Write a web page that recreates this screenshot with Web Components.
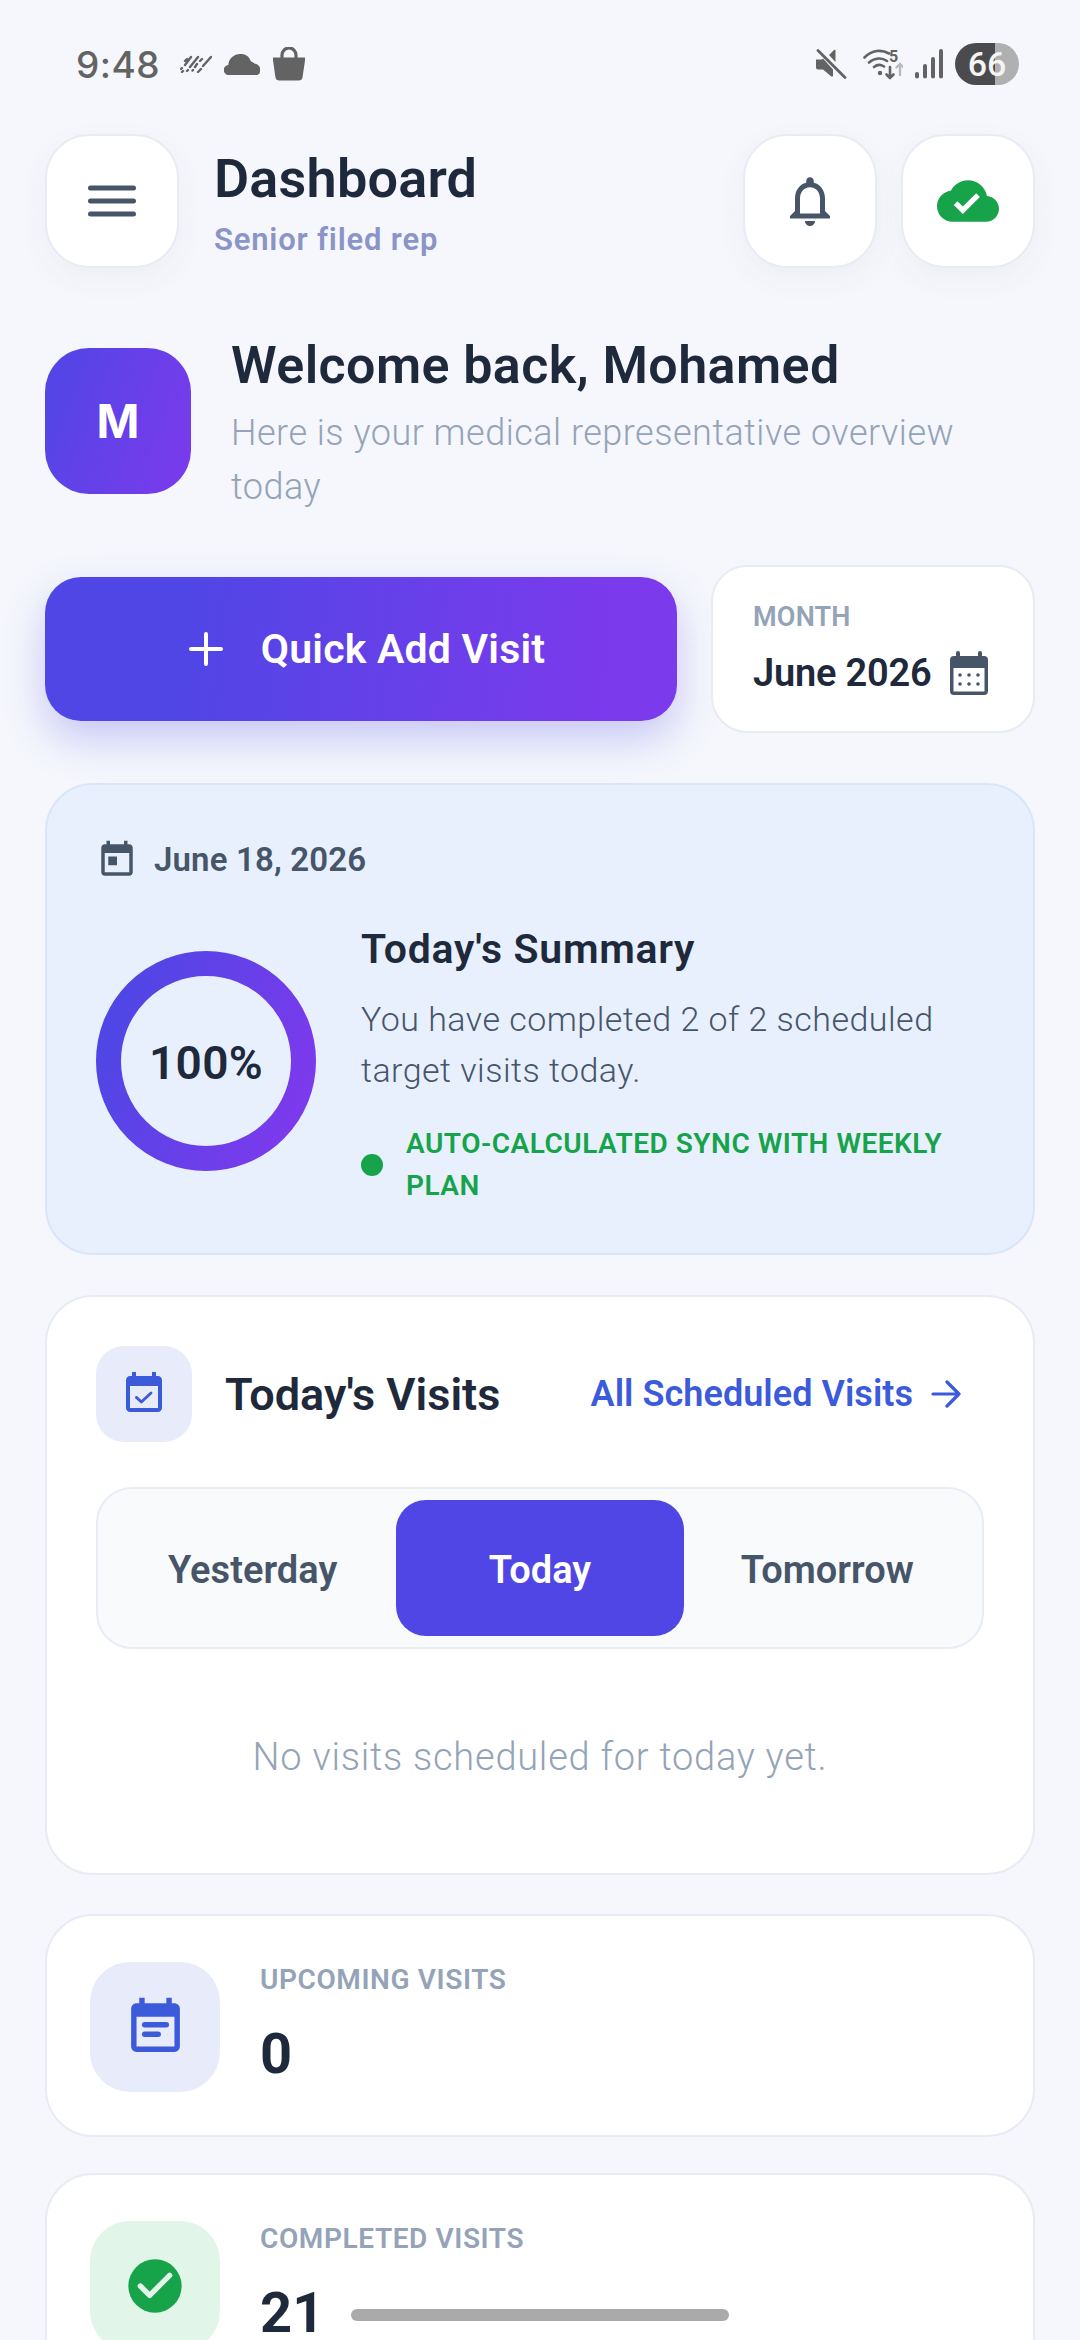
<!doctype html>
<html><head><meta charset="utf-8"><title>Dashboard</title>
<style>
html,body{margin:0;padding:0;height:2340px;overflow:hidden;background:#f5f7fc}
body{font-family:Roboto,"Noto Sans",sans-serif;color:#1e293b}
</style></head><body>
<app-page>
  <status-bar></status-bar>
  <app-header title="Dashboard" sub="Senior filed rep"></app-header>
  <welcome-block initial="M" name="Welcome back, Mohamed" text="Here is your medical representative overview today"></welcome-block>
  <action-row></action-row>
  <summary-card></summary-card>
  <visits-card></visits-card>
  <stat-card label="UPCOMING VISITS" value="0" kind="upcoming"></stat-card>
  <stat-card label="COMPLETED VISITS" value="21" kind="done"></stat-card>
</app-page>
<home-bar></home-bar>
<script>
const def=(name,css,html)=>customElements.define(name,class extends HTMLElement{
  connectedCallback(){
    if(this.shadowRoot)return;
    const r=this.attachShadow({mode:'open'});
    const h=typeof html==='function'?html(this):html;
    r.innerHTML=`<style>*,:host{box-sizing:border-box}${css}</style>${h}`;
  }
});
const card='background:#fff;border:2px solid #e8ebf4;';

def('app-page',`:host{display:flex;flex-direction:column;padding:0 45px}`,`<slot></slot>`);

def('status-bar',`
:host{display:flex;align-items:center;height:134px;margin:0 16px 0 31px;padding-bottom:6px;color:#636363}
.t{font:500 37px Inter,sans-serif;letter-spacing:.5px;margin-right:20px;line-height:1}
svg{display:block;flex:none}
.sp{flex:1}
.bat{width:64px;height:42px;border-radius:21px;overflow:hidden;background:linear-gradient(90deg,#4b4b4d 0 40px,#b0b0b3 40px);color:#f4f4f4;font:500 34px/42px Roboto,sans-serif;text-align:center;margin-left:12px}
`,`
<span class="t">9:48</span>
<svg width="32" height="20" viewBox="0 0 32 20" style="margin-right:12px"><g stroke="#636363" stroke-width="2.400" stroke-linecap="round" fill="none"><path d="M7 5L5 7M2 14l-1 1M11 3L5 11M3 17l-1 1M18 3l-8 10M8 16l-1 1M22 5l-2 2M17 10l-2 3M13 16l-.5.6M31 3l-8 9M21 15l-3 3"/></g></svg>
<svg width="36" height="21" viewBox="0 0 36 21" style="margin-right:12px"><path fill="#636363" d="M5 21a5 5 0 0 1-.6-10A12 11 0 0 1 17 0a10 10 0 0 1 10 7.600a7 7 0 0 1 3.500 1.900a6 6 0 0 1 5.500 7.500v.5c0 2-1.500 3.500-3.500 3.500z"/></svg>
<svg width="34" height="34" viewBox="0 0 34 34"><path fill="none" stroke="#636363" stroke-width="3.200" d="M10 11V8a7 7 0 0 1 14 0v3"/><path fill="#636363" d="M1 10.500h32v3l-2.400 16.500a4 4 0 0 1-4 3.500H7.400a4 4 0 0 1-4-3.500L1 13.500z"/></svg>
<span class="sp"></span>
<svg width="32" height="30" viewBox="0 0 32 30" style="margin-right:16px"><path fill="#636363" d="M1 10.500h6l1-1 10 11v6c0 1.200-1 1.500-2 .7l-8-6.700H3a2 2 0 0 1-2-2zM14 6l5-5c.8-.6 1.500-.2 1.500 1v11z"/><path stroke="#636363" stroke-width="2.800" stroke-linecap="round" d="M3 1.500l27 27"/></svg>
<svg width="40" height="32" viewBox="0 0 40 32" style="margin-right:12px"><g fill="none" stroke="#636363" stroke-width="2.600" stroke-linecap="round"><path d="M1.500 9.500C9 1.500 19 1.500 26 5.500M6 14.500c6-5 13-5 18-1.500M11 19c3-2.500 7-2.500 10-.5"/><path d="M27 19v10.500M23.500 26.500l3.500 3.500 3.500-3.500"/></g><circle cx="17" cy="25" r="2.200" fill="#636363"/><g fill="none" stroke="#b9babc" stroke-width="2.400" stroke-linecap="round"><path d="M37 27V16M33.500 19.500l3.500-3.500 3.500 3.500"/></g><text x="26" y="13.500" font-family="Roboto" font-weight="700" font-size="16" fill="#636363">5</text></svg>
<svg width="28" height="30" viewBox="0 0 28 30"><g fill="#636363"><rect x="0" y="23" width="4" height="6.500" rx="2"/><rect x="8" y="15" width="4" height="14.500" rx="2"/><rect x="16" y="8" width="4" height="21.500" rx="2"/><rect x="24" y="0" width="4" height="29.500" rx="2"/></g></svg>
<div class="bat">66</div>
`);

def('icon-button',`
:host{display:flex;align-items:center;justify-content:center;width:134px;height:134px;${card}border-radius:44px;box-shadow:0 10px 30px rgba(71,85,105,.05);flex:none}
`,`<slot></slot>`);

def('app-header',`
:host{display:flex;align-items:center;gap:24px;height:134px}
.tx{flex:1;display:flex;flex-direction:column;gap:10px;margin-left:11px;padding-top:6px}
.a{font-weight:600;font-size:54px;letter-spacing:.2px;line-height:62px;color:#1e293b}
.b{font-weight:600;font-size:31px;letter-spacing:.8px;line-height:40px;color:#8b94c7}
svg{display:block}
`,h=>`
<icon-button><svg width="60" height="60" viewBox="0 0 60 60"><path stroke="#475569" stroke-width="5" stroke-linecap="round" d="M8.500 17h43M8.500 30h43M8.500 43h43"/></svg></icon-button>
<div class="tx"><div class="a">${h.getAttribute('title')}</div><div class="b">${h.getAttribute('sub')}</div></div>
<icon-button><svg width="60" height="60" viewBox="0 0 24 24"><path fill="#475569" d="M12 22c1.100 0 2-.9 2-2h-4c0 1.100.9 2 2 2zm6-6v-5c0-3.070-1.630-5.640-4.500-6.320V4c0-.83-.67-1.500-1.500-1.500s-1.500.67-1.500 1.500v.68C7.640 5.360 6 7.920 6 11v5l-2 2v1h16v-1l-2-2zm-2 1H8v-6c0-2.480 1.510-4.500 4-4.500s4 2.020 4 4.500v6z"/></svg></icon-button>
<icon-button><svg width="62" height="62" viewBox="0 0 24 24"><path fill="#16a34a" d="M19.350 10.040C18.670 6.590 15.640 4 12 4 9.110 4 6.600 5.640 5.350 8.040 2.340 8.360 0 10.910 0 14c0 3.310 2.690 6 6 6h13c2.760 0 5-2.240 5-5 0-2.640-2.050-4.780-4.650-4.960zM10 17l-3.500-3.500 1.410-1.410L10 14.170 15.180 9l1.410 1.410L10 17z"/></svg></icon-button>
`);

def('welcome-block',`
:host{display:flex;align-items:center;gap:40px;margin-top:60px}
.av{flex:none;width:146px;height:146px;border-radius:44px;background:linear-gradient(110deg,#4f46e5,#7c3aed);color:#fff;font:700 46px Inter,sans-serif;display:flex;align-items:center;justify-content:center}
.tx{max-width:770px;padding-top:3px}
.a{font-weight:600;font-size:52px;letter-spacing:.4px;line-height:70px;color:#1e293b}
.b{font-weight:300;font-size:36px;letter-spacing:.5px;line-height:54px;color:#94a3b8;margin-top:5px}
`,h=>`<div class="av">${h.getAttribute('initial')}</div><div class="tx"><div class="a">${h.getAttribute('name')}</div><div class="b">${h.getAttribute('text')}</div></div>`);

def('action-row',`
:host{display:flex;align-items:center;gap:34px;margin-top:51px}
.q{flex:1;height:144px;border-radius:36px;background:linear-gradient(95deg,#4f46e5 20%,#7c3aed 90%);box-shadow:0 18px 42px rgba(79,70,229,.27);display:flex;align-items:center;justify-content:center;gap:38px;padding-left:12px;color:#fff;font-weight:600;font-size:41px;letter-spacing:.2px}
.m{flex:none;width:324px;height:168px;${card}border-radius:36px;padding:34px 0 0 40px}
.l{font-weight:600;font-size:27px;letter-spacing:.2px;line-height:32px;color:#94a3b8}
.r{display:flex;align-items:center;gap:18px;margin-top:13px;font-weight:600;font-size:38px;letter-spacing:-.2px;line-height:54px;color:#1e293b}
svg{display:block;flex:none}
`,`
<div class="q"><svg width="34" height="34" viewBox="0 0 34 34"><path stroke="#fff" stroke-width="4" stroke-linecap="round" d="M17 2v30M2 17h30"/></svg><span>Quick Add Visit</span></div>
<div class="m"><div class="l">MONTH</div><div class="r"><span>June 2026</span><svg width="38" height="44" viewBox="0 0 38 44"><path fill="#475569" d="M8 0a2 2 0 0 1 2 2v3h18V2a2 2 0 0 1 4 0v3h2a4 4 0 0 1 4 4v31a4 4 0 0 1-4 4H4a4 4 0 0 1-4-4V9a4 4 0 0 1 4-4h2V2a2 2 0 0 1 2-2z"/><rect x="3.500" y="17" width="31" height="23.500" fill="#fff"/><g fill="#475569"><circle cx="10" cy="24" r="1.800"/><circle cx="19" cy="24" r="1.800"/><circle cx="28" cy="24" r="1.800"/><circle cx="10" cy="33" r="1.800"/><circle cx="19" cy="33" r="1.800"/><circle cx="28" cy="33" r="1.800"/></g></svg></div></div>
`);

def('progress-ring',`
:host{position:relative;display:block;flex:none;width:220px;height:220px}
svg{display:block}
.v{position:absolute;inset:0;display:flex;align-items:center;justify-content:center;font-weight:600;font-size:46px;letter-spacing:.3px;color:#1e293b;padding-top:4px}
`,h=>`<svg width="220" height="220" viewBox="0 0 220 220"><defs><linearGradient id="g" x1="0" y1=".3" x2="1" y2=".7"><stop offset="0" stop-color="#4f46e5"/><stop offset="1" stop-color="#7c3aed"/></linearGradient></defs><circle cx="110" cy="110" r="97.500" fill="none" stroke="url(#g)" stroke-width="25"/></svg><div class="v"><slot></slot></div>`);

def('summary-card',`
:host{display:block;margin-top:50px;height:472px;background:#e8f0fe;border:2px solid #d9e5f9;border-radius:48px;padding:51px 49px 0}
.d{display:flex;align-items:center;gap:16px;font-weight:600;font-size:33px;letter-spacing:.15px;line-height:48px;color:#475569}
svg{display:block;flex:none}
.body{display:flex;align-items:center;gap:45px;margin-top:30px}
.t{font-weight:600;font-size:41px;letter-spacing:.7px;line-height:60px;color:#1e293b;padding-top:5px}
.p{font-weight:300;font-size:34px;letter-spacing:.47px;line-height:51px;color:#475569;margin-top:15px}
.s{display:flex;align-items:center;gap:23px;margin-top:27px;font-weight:600;font-size:28px;letter-spacing:.5px;line-height:42px;color:#16a34a}
.dot{flex:none;width:22px;height:22px;border-radius:50%;background:#16a34a}
`,`
<div class="d"><svg width="42" height="42" viewBox="0 0 24 24"><path fill="#475569" d="M19 3h-1V1h-2v2H8V1H6v2H5c-1.110 0-1.990.9-1.990 2L3 19c0 1.100.89 2 2 2h14c1.100 0 2-.9 2-2V5c0-1.100-.9-2-2-2zm0 16H5V8h14v11zM7 10h5v5H7z"/></svg><span>June 18, 2026</span></div>
<div class="body"><progress-ring>100%</progress-ring><div>
<div class="t">Today's Summary</div>
<div class="p">You have completed 2 of 2 scheduled target visits today.</div>
<div class="s"><span class="dot"></span><span>AUTO-CALCULATED SYNC WITH WEEKLY PLAN</span></div>
</div></div>
`);

def('day-tabs',`
:host{display:grid;grid-template-columns:1fr 1fr 1fr;height:162px;margin-top:45px;padding:11px;background:#f8fafc;border:2px solid #e8ecf4;border-radius:36px}
.x{display:flex;align-items:center;justify-content:center;font-weight:600;font-size:38px;letter-spacing:.05px;color:#475569;border-radius:30px;padding-top:3px}
.on{background:#4f46e5;color:#fff}
`,`<div class="x">Yesterday</div><div class="x on">Today</div><div class="x">Tomorrow</div>`);

def('visits-card',`
:host{display:block;margin-top:40px;height:580px;${card}border-radius:48px;padding:49px 49px 0}
.h{display:flex;align-items:center;gap:33px}
.i{flex:none;width:96px;height:96px;border-radius:28px;background:#e8ebfa;display:flex;align-items:center;justify-content:center}
.t{flex:1;font-weight:600;font-size:45px;color:#1e293b}
.l{display:flex;align-items:center;gap:18px;font-weight:600;font-size:36px;letter-spacing:.05px;color:#3b5bdb;margin-right:23px}
.e{text-align:center;font-weight:300;font-size:38px;letter-spacing:.75px;line-height:54px;color:#94a3b8;margin-top:81px}
svg{display:block;flex:none}
`,`
<div class="h"><div class="i"><svg width="48" height="48" viewBox="0 0 24 24"><path fill="#3b5bdb" d="M19 3h-1V1h-2v2H8V1H6v2H5c-1.110 0-1.990.9-1.990 2L3 19c0 1.100.89 2 2 2h14c1.100 0 2-.9 2-2V5c0-1.100-.9-2-2-2zm0 16H5V8h14v11z"/><path fill="none" stroke="#3b5bdb" stroke-width="1.400" stroke-linecap="round" stroke-linejoin="round" d="M8.200 13.700l2.500 2.300 4.800-4.500"/></svg></div>
<div class="t">Today's Visits</div>
<div class="l"><span>All Scheduled Visits</span><svg width="30" height="28" viewBox="0 0 30 28"><path fill="none" stroke="#3b5bdb" stroke-width="3.200" stroke-linecap="round" stroke-linejoin="round" d="M2 14h26M16 2l12 12-12 12"/></svg></div></div>
<day-tabs></day-tabs>
<div class="e">No visits scheduled for today yet.</div>
`);

def('stat-card',`
:host{display:flex;gap:40px;margin-top:39px;height:223px;flex:none;${card}border-radius:48px;padding:46px 0 0 43px}
:host([kind=done]){margin-top:36px}
.i{flex:none;width:130px;height:130px;border-radius:40px;display:flex;align-items:center;justify-content:center}
.l{font-weight:600;font-size:28px;letter-spacing:.6px;line-height:36px;color:#94a3b8}
.v{font-weight:700;font-size:56px;line-height:72px;margin-top:20px;color:#1e293b}
svg{display:block}
`,h=>{
  const done=h.getAttribute('kind')==='done';
  const icon=done
   ?`<svg width="64" height="64" viewBox="0 0 24 24"><circle cx="12" cy="12" r="10" fill="#16a34a"/><path fill="none" stroke="#e1f5e8" stroke-width="2" stroke-linecap="round" stroke-linejoin="round" d="M6.500 12l3.500 3.500 7.500-7.500"/></svg>`
   :`<svg width="65" height="65" viewBox="0 0 24 24"><path fill="#3b5bdb" d="M19 3h-1V1h-2v2H8V1H6v2H5c-1.110 0-1.990.9-1.990 2L3 19c0 1.100.89 2 2 2h14c1.100 0 2-.9 2-2V5c0-1.100-.9-2-2-2zm0 16H5V8h14v11z"/><rect x="7" y="10" width="10" height="2" rx="1" fill="#3b5bdb"/><rect x="7" y="13.500" width="7" height="2" rx="1" fill="#3b5bdb"/></svg>`;
  return `<div class="i" style="background:${done?'#e1f5e8':'#e8ebfa'}">${icon}</div><div><div class="l">${h.getAttribute('label')}</div><div class="v">${h.getAttribute('value')}</div></div>`;
});

def('home-bar',`:host{position:absolute;left:351px;top:2309px;width:378px;height:12px;border-radius:6px;background:#aaa}`,``);
</script>
</body></html>
